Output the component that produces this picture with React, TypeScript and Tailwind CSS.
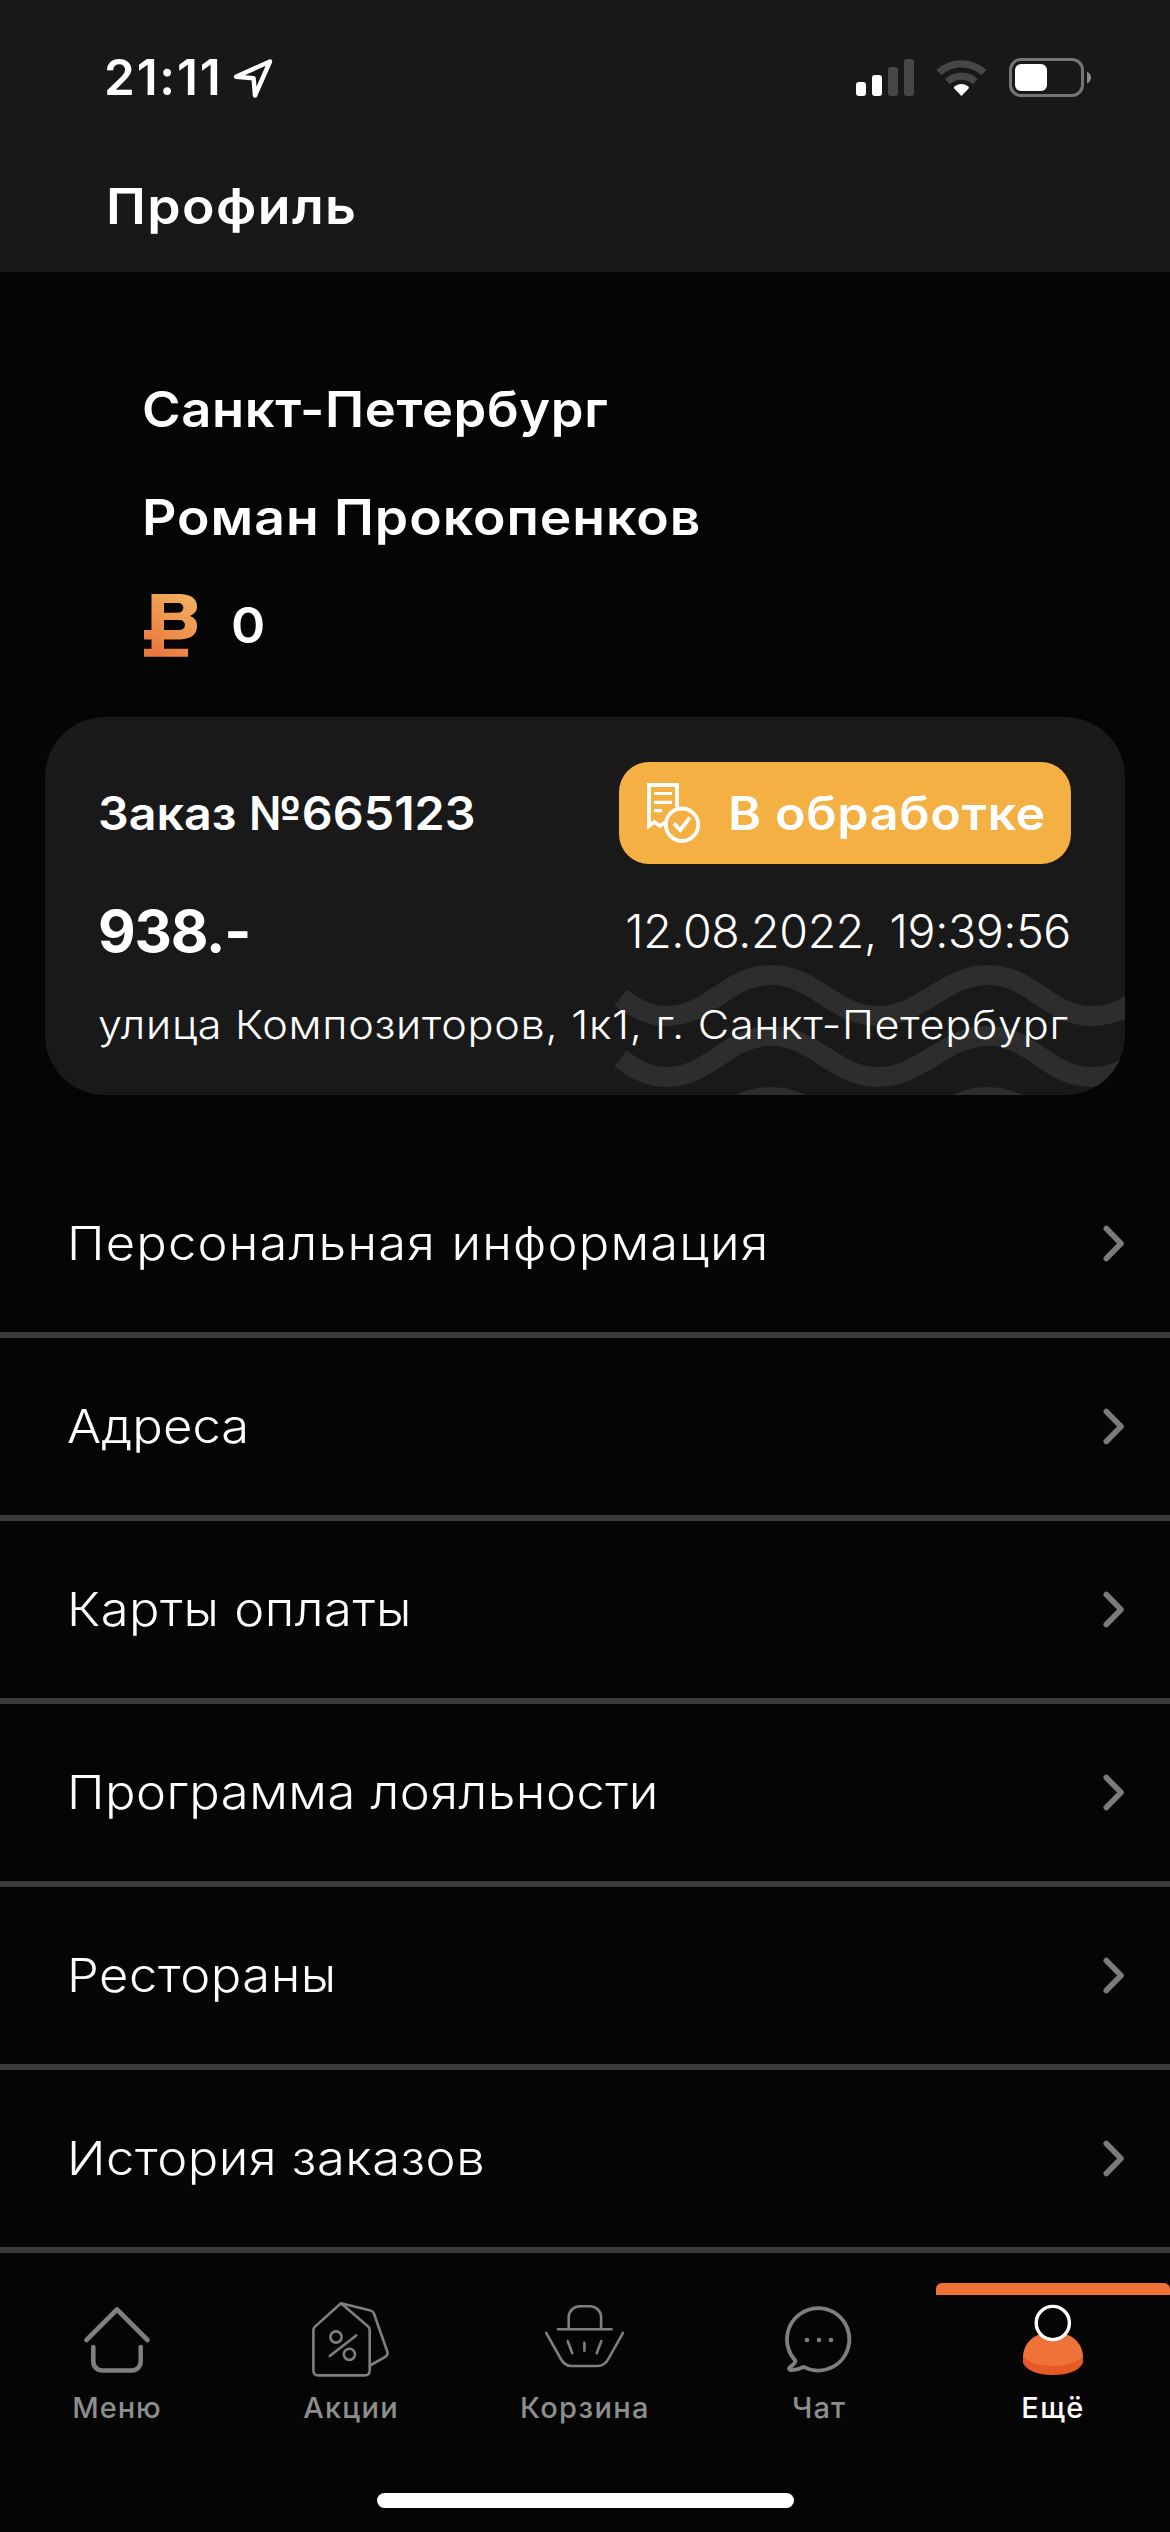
import React from 'react';
import clsx from 'clsx';

interface MenuItem {
    title: string;
    tracking: string;
}

interface Tab {
    label: string;
    tracking: string;
    icon: React.ReactNode;
    active?: boolean;
}

const menuItems: MenuItem[] = [
    { title: 'Персональная информация', tracking: 'tracking-[1.1px]' },
    { title: 'Адреса', tracking: 'tracking-[0.1px]' },
    { title: 'Карты оплаты', tracking: 'tracking-[0.45px]' },
    { title: 'Программа лояльности', tracking: 'tracking-[0.45px]' },
    { title: 'Рестораны', tracking: 'tracking-[0.5px]' },
    { title: 'История заказов', tracking: 'tracking-[0.5px]' },
];

const HomeIcon = () => (
    <svg className="w-[90px] h-[90px]" viewBox="0 0 90 90" fill="none" stroke="#7f7f7f" strokeWidth={4.6} strokeLinecap="round" strokeLinejoin="round">
        <path d="M14.5 45 45 14.5 75.5 45" />
        <path d="M21.3 52v14.5a9 9 0 0 0 9 9h29.4a9 9 0 0 0 9-9V52" />
    </svg>
);

const TagsIcon = () => (
    <svg className="w-[90px] h-[90px]" viewBox="0 0 90 90" fill="none" stroke="#7f7f7f" strokeWidth={2.6} strokeLinecap="round" strokeLinejoin="round">
        <path d="M35 8.3 9 31.6q-1.6 1.4-1.6 3.6v40q0 5.2 5.2 5.2h45.9q5.2 0 5.2-5.2V35q0-2-1.6-3.4z" />
        <path d="m35 8.3 29.5 7.3q2.6.7 3.5 3.2l13.2 37.4q1.2 3.6-2 5.6L64 70.5" />
        <circle cx="30" cy="42" r="5.6" />
        <circle cx="43.4" cy="59.3" r="5.6" />
        <path d="m23.8 61 26.4-20.6" />
    </svg>
);

const BasketIcon = () => (
    <svg className="w-[90px] h-[90px]" viewBox="0 0 90 90" fill="none" stroke="#7f7f7f" strokeWidth={2.6} strokeLinecap="round" strokeLinejoin="round">
        <path d="M28.7 34V22.3a11 11 0 0 1 11-11h10.4a11 11 0 0 1 11 11V34" />
        <path d="M18 34.3h53.5" />
        <path d="m6.2 37.8 14.4 25.7q4 7.5 11 7.5h26q7 0 11-7.5L83 37.8" />
        <path d="m27.7 46.2 4.6 12M44.4 47.8v8M61.3 46.2l-4.6 12" />
    </svg>
);

const ChatIcon = () => (
    <svg className="w-[90px] h-[90px]" viewBox="0 0 90 90" fill="none" stroke="#7f7f7f" strokeWidth={3.8} strokeLinejoin="round">
        <path d="M21.5 65.8a31.2 31.2 0 1 1 8 6.1q-6.2 3.6-13 3.1-2.6-.8-.8-2.7 4.6-2.8 5.800-6.500z" />
        <g fill="#7f7f7f" stroke="none">
            <circle cx="33" cy="45" r="2.3" />
            <circle cx="45" cy="45" r="2.3" />
            <circle cx="57" cy="45" r="2.3" />
        </g>
    </svg>
);

const ProfileIcon = () => (
    <svg className="w-[90px] h-[90px]" viewBox="0 0 90 90">
        <path d="M15 60v8c4 8 15 12 30 12s26-4 30-12v-8z" fill="#e65a28" />
        <path d="M15 61c1-14 12-24 30-24s29 10 30 24c-6 6.5-16 10-30 10s-24-3.5-30-10z" fill="#ef7238" />
        <circle cx="44.8" cy="28" r="16.6" fill="#050505" stroke="#fff" strokeWidth={3.4} />
    </svg>
);

const tabs: Tab[] = [
    { label: 'Меню', tracking: 'tracking-[1px]', icon: <HomeIcon /> },
    { label: 'Акции', tracking: 'tracking-[1.25px]', icon: <TagsIcon /> },
    { label: 'Корзина', tracking: 'tracking-[1.4px]', icon: <BasketIcon /> },
    { label: 'Чат', tracking: 'tracking-[1.1px]', icon: <ChatIcon /> },
    { label: 'Ещё', tracking: 'tracking-[1.5px]', icon: <ProfileIcon />, active: true },
];

const StatusBar = () => (
    <div className="h-[141px] pt-[15px] pl-[104px] pr-[79px] flex items-center justify-between">
        <div className="flex items-center gap-[9px]">
            <span className="text-[49.5px] leading-none font-semibold tracking-[1.8px]">21:11</span>
            <svg className="w-11 h-11" viewBox="0 0 44 44" fill="none" stroke="#fff" strokeWidth={4.4} strokeLinejoin="round">
                <path d="M5 20.7 39 5.5 24 39.5 22.6 22.3z" />
            </svg>
        </div>
        <div className="flex items-center gap-[22px]">
            <svg className="w-[58px] h-10" viewBox="0 0 58 40">
                <rect x="0" y="24" width="10" height="14" rx="3" fill="#fff" />
                <rect x="16" y="17" width="10" height="21" rx="3" fill="#fff" />
                <rect x="32" y="9" width="10" height="29" rx="3" fill="#464646" />
                <rect x="48" y="1" width="10" height="37" rx="3" fill="#464646" />
            </svg>
            <svg className="w-[51px] h-10" viewBox="0 0 51 40" fill="none" stroke="#464646" strokeWidth={7.2}>
                <path d="M2.9 14.7a33 33 0 0 1 45 0" />
                <path d="M11.4 23.7a20.5 20.5 0 0 1 28 0" />
                <path d="M25.4 38 18.2 30.6q-.8-1.4.6-2.3 6.6-4.4 13.2 0 1.4.9.6 2.3z" fill="#fff" stroke="none" />
            </svg>
            <svg className="w-[82px] h-10" viewBox="0 0 82 40">
                <rect x="1.5" y="1.5" width="72" height="36" rx="10.5" fill="none" stroke="#757575" strokeWidth={3} />
                <rect x="6" y="6" width="32" height="27" rx="6" fill="#fff" />
                <path d="M78 13.5q4 2 4 6t-4 6z" fill="#8a8a8a" />
            </svg>
        </div>
    </div>
);

const CoinIcon = () => (
    <svg className="w-[54px] h-[63px]" viewBox="0 0 54 63">
        <defs>
            <linearGradient id="coin" x1="0.8" y1="0" x2="0.2" y2="1">
                <stop offset="0" stopColor="#f3af5c" />
                <stop offset="1" stopColor="#e8763d" />
            </linearGradient>
        </defs>
        <path
            fill="url(#coin)"
            fillRule="evenodd"
            d="M7.5 0H37q16 1 16 13 0 6-7 9 7 2.5 7 10 0 12.5-17 13.5H20v9.2h24v8H0v-8h7.5v-9.2H0V36h7.5zM20 9v9.7h14.5a4.85 4.85 0 0 0 0-9.7zM20 26v10h16a5 5 0 0 0 0-10z"
        />
    </svg>
);

const OrderCard = () => (
    <div className="relative mx-[45px] mt-[38px] h-[378px] rounded-[60px] bg-[#191919] overflow-hidden pt-[45px] pl-[53px] pr-[54px]">
        <svg className="absolute right-0 bottom-0 w-[515px] h-[135px]" viewBox="0 0 515 135" fill="none" stroke="#2d2d2d" strokeWidth={20}>
            {[0, 61, 122].map((y) => (
                <path
                    key={y}
                    transform={`translate(0 ${y})`}
                    d="M10.5 37.5C26 49.5 40 56 56 56c44 0 61-41 105-41s63 41 107 41 66-41 110-41 60 41 104 41 60-41 108-41"
                />
            ))}
        </svg>
        <div className="relative">
            <div className="flex items-center justify-between h-[102px]">
                <span className="origin-left scale-x-[1.04] text-[46.5px] leading-none font-semibold">Заказ №665123</span>
                <div className="flex items-center w-[452px] h-[102px] rounded-[30px] bg-[#f4b042] pl-[28px]">
                    <svg className="w-[54px] h-[60px]" viewBox="0 0 54 60" fill="none" stroke="#fff" strokeWidth={3.8}>
                        <path d="M30 24V2H2v41l5.3-4 5.7 4 5-3.5" />
                        <path d="M7 10.5h18M7 19.3h18M7 27.7h8" strokeWidth={3.2} />
                        <circle cx="35" cy="41.7" r="16.2" />
                        <path d="m27 40.5 6.2 6.5L43 34.5" />
                    </svg>
                    <span className="ml-[27px] origin-left scale-x-[1.08] text-[46.5px] leading-none font-semibold tracking-[0.6px] whitespace-nowrap">В обработке</span>
                </div>
            </div>
            <div className="flex items-center justify-between h-[60px] mt-[37px]">
                <span className="text-[58px] leading-none font-bold tracking-[-1.2px]">938.-</span>
                <span className="text-[46.5px] leading-none font-light tracking-[-0.35px]">12.08.2022, 19:39:56</span>
            </div>
            <p className="mt-[43px] origin-left scale-x-[1.08] text-[40px] leading-[41px] font-light tracking-[0.65px] whitespace-nowrap">
                улица Композиторов, 1к1, г. Санкт-Петербург
            </p>
        </div>
    </div>
);

export default function App() {
    return (
        <div className="w-[1170px] h-[2532px] bg-[#050505] text-white font-['Inter','Noto_Sans',sans-serif] flex flex-col overflow-hidden">
            <header className="h-[272px] bg-[#181818]">
                <StatusBar />
                <h1 className="pl-[106px] text-[49.5px] leading-[131px] font-semibold">
                    <span className="inline-block origin-left scale-x-[1.08] tracking-[1.3px]">Профиль</span>
                </h1>
            </header>

            <section className="flex flex-col items-start pt-[83px] pl-[142px] text-[49.5px] leading-[108px] font-semibold">
                <p className="origin-left scale-x-[1.06] tracking-[0.6px]">Санкт-Петербург</p>
                <p className="origin-left scale-x-[1.08] tracking-[0.9px]">Роман Прокопенков</p>
                <div className="flex items-center h-[108px] pl-[2px]">
                    <CoinIcon />
                    <span className="ml-[33px] origin-left scale-x-[1.05]">0</span>
                </div>
            </section>

            <OrderCard />

            <ul className="mt-[60px]">
                {menuItems.map((item) => (
                    <li key={item.title} className="flex items-center justify-between h-[183px] pl-[67px] pr-11 border-b-[6px] border-[#3b3b3b]">
                        <span className={clsx('origin-left scale-x-[1.09] text-[46.5px] leading-none font-light', item.tracking)}>{item.title}</span>
                        <svg className="w-6 h-10" viewBox="0 0 24 40" fill="none" stroke="#7b7b7b" strokeWidth={5.6} strokeLinecap="round" strokeLinejoin="round">
                            <path d="m4.3 4.5 14.7 15-14.7 15" />
                        </svg>
                    </li>
                ))}
            </ul>

            <nav className="grid grid-cols-5 pt-[30px]">
                {tabs.map((tab) => (
                    <button key={tab.label} className="flex flex-col items-center">
                        <span className={clsx('w-full h-3 rounded-t-md', tab.active && 'bg-[#ef7238]')} />
                        {tab.icon}
                        <span className={clsx('mt-2 text-[29px] leading-[30px] font-medium', tab.tracking, tab.active ? 'text-white' : 'text-[#8e8e8e]')}>
                            {tab.label}
                        </span>
                    </button>
                ))}
            </nav>

            <div className="mt-[70px] mx-auto w-[417px] h-[15px] rounded-full bg-white" />
        </div>
    );
}
